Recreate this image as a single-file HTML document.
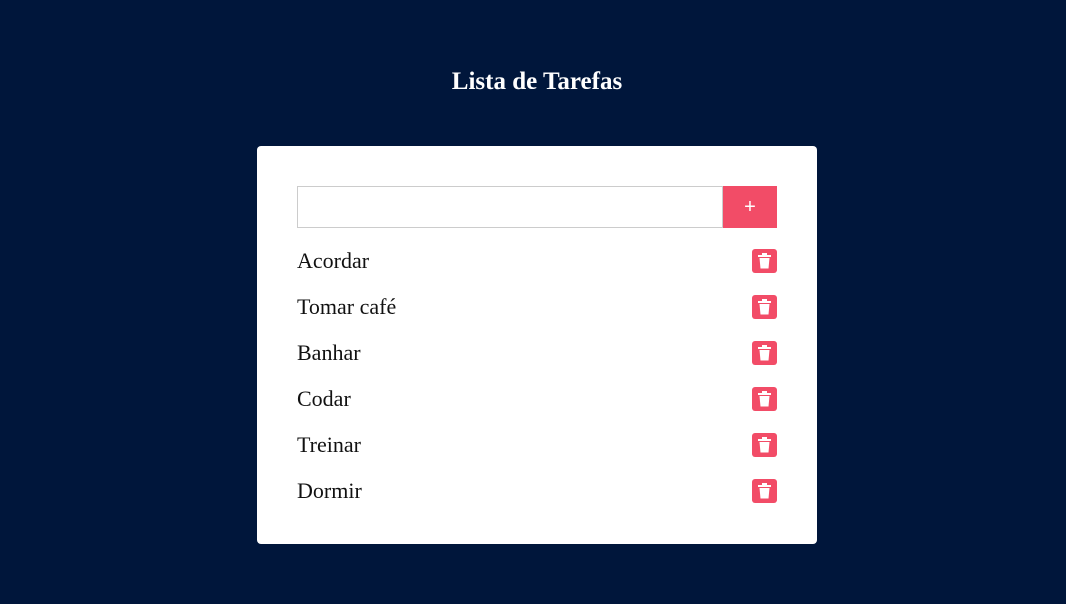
<!DOCTYPE html>
<html><head><style>
*{margin:0;padding:0;box-sizing:border-box}
body{width:1066px;height:604px;background:#00163b;font-family:"Liberation Serif",serif;position:relative;overflow:hidden}
h1{position:absolute;top:67px;left:0;width:1066px;text-align:center;color:#fff;font-size:25px;font-weight:bold;line-height:30px;padding-left:8px}
.card{position:absolute;left:257px;top:146px;width:560px;height:398px;background:#fff;border-radius:4px}
.inp{position:absolute;left:40px;top:40px;width:426px;height:42px;border:1px solid #ccc}
.btn{position:absolute;left:466px;top:40px;width:54px;height:42px;background:#f24c67;color:#fff;font-family:"Liberation Sans",sans-serif;font-size:20px;text-align:center;line-height:42px}
.row{position:absolute;left:40px;width:480px;height:24px;font-size:22px;line-height:24px;color:#111}
.t{position:absolute;right:0;top:0;width:25px;height:24px;background:#f24c67;border-radius:3px}
.t svg{position:absolute;left:6px;top:4px}
</style></head><body>
<h1>Lista de Tarefas</h1>
<div class="card">
<div class="inp"></div><div class="btn">+</div>
<div class="row" style="top:103px">Acordar<div class="t"><svg width="13" height="16" viewBox="0 0 13 16"><rect x="0" y="2" width="13" height="2" fill="#fff"/><rect x="4" y="0" width="5" height="2" fill="#fff"/><path d="M1.5 5h10l-1 10.5h-8z" fill="#fff"/></svg></div></div>
<div class="row" style="top:149px">Tomar café<div class="t"><svg width="13" height="16" viewBox="0 0 13 16"><rect x="0" y="2" width="13" height="2" fill="#fff"/><rect x="4" y="0" width="5" height="2" fill="#fff"/><path d="M1.5 5h10l-1 10.5h-8z" fill="#fff"/></svg></div></div>
<div class="row" style="top:195px">Banhar<div class="t"><svg width="13" height="16" viewBox="0 0 13 16"><rect x="0" y="2" width="13" height="2" fill="#fff"/><rect x="4" y="0" width="5" height="2" fill="#fff"/><path d="M1.5 5h10l-1 10.5h-8z" fill="#fff"/></svg></div></div>
<div class="row" style="top:241px">Codar<div class="t"><svg width="13" height="16" viewBox="0 0 13 16"><rect x="0" y="2" width="13" height="2" fill="#fff"/><rect x="4" y="0" width="5" height="2" fill="#fff"/><path d="M1.5 5h10l-1 10.5h-8z" fill="#fff"/></svg></div></div>
<div class="row" style="top:287px">Treinar<div class="t"><svg width="13" height="16" viewBox="0 0 13 16"><rect x="0" y="2" width="13" height="2" fill="#fff"/><rect x="4" y="0" width="5" height="2" fill="#fff"/><path d="M1.5 5h10l-1 10.5h-8z" fill="#fff"/></svg></div></div>
<div class="row" style="top:333px">Dormir<div class="t"><svg width="13" height="16" viewBox="0 0 13 16"><rect x="0" y="2" width="13" height="2" fill="#fff"/><rect x="4" y="0" width="5" height="2" fill="#fff"/><path d="M1.5 5h10l-1 10.5h-8z" fill="#fff"/></svg></div></div>
</div>
</body></html>
